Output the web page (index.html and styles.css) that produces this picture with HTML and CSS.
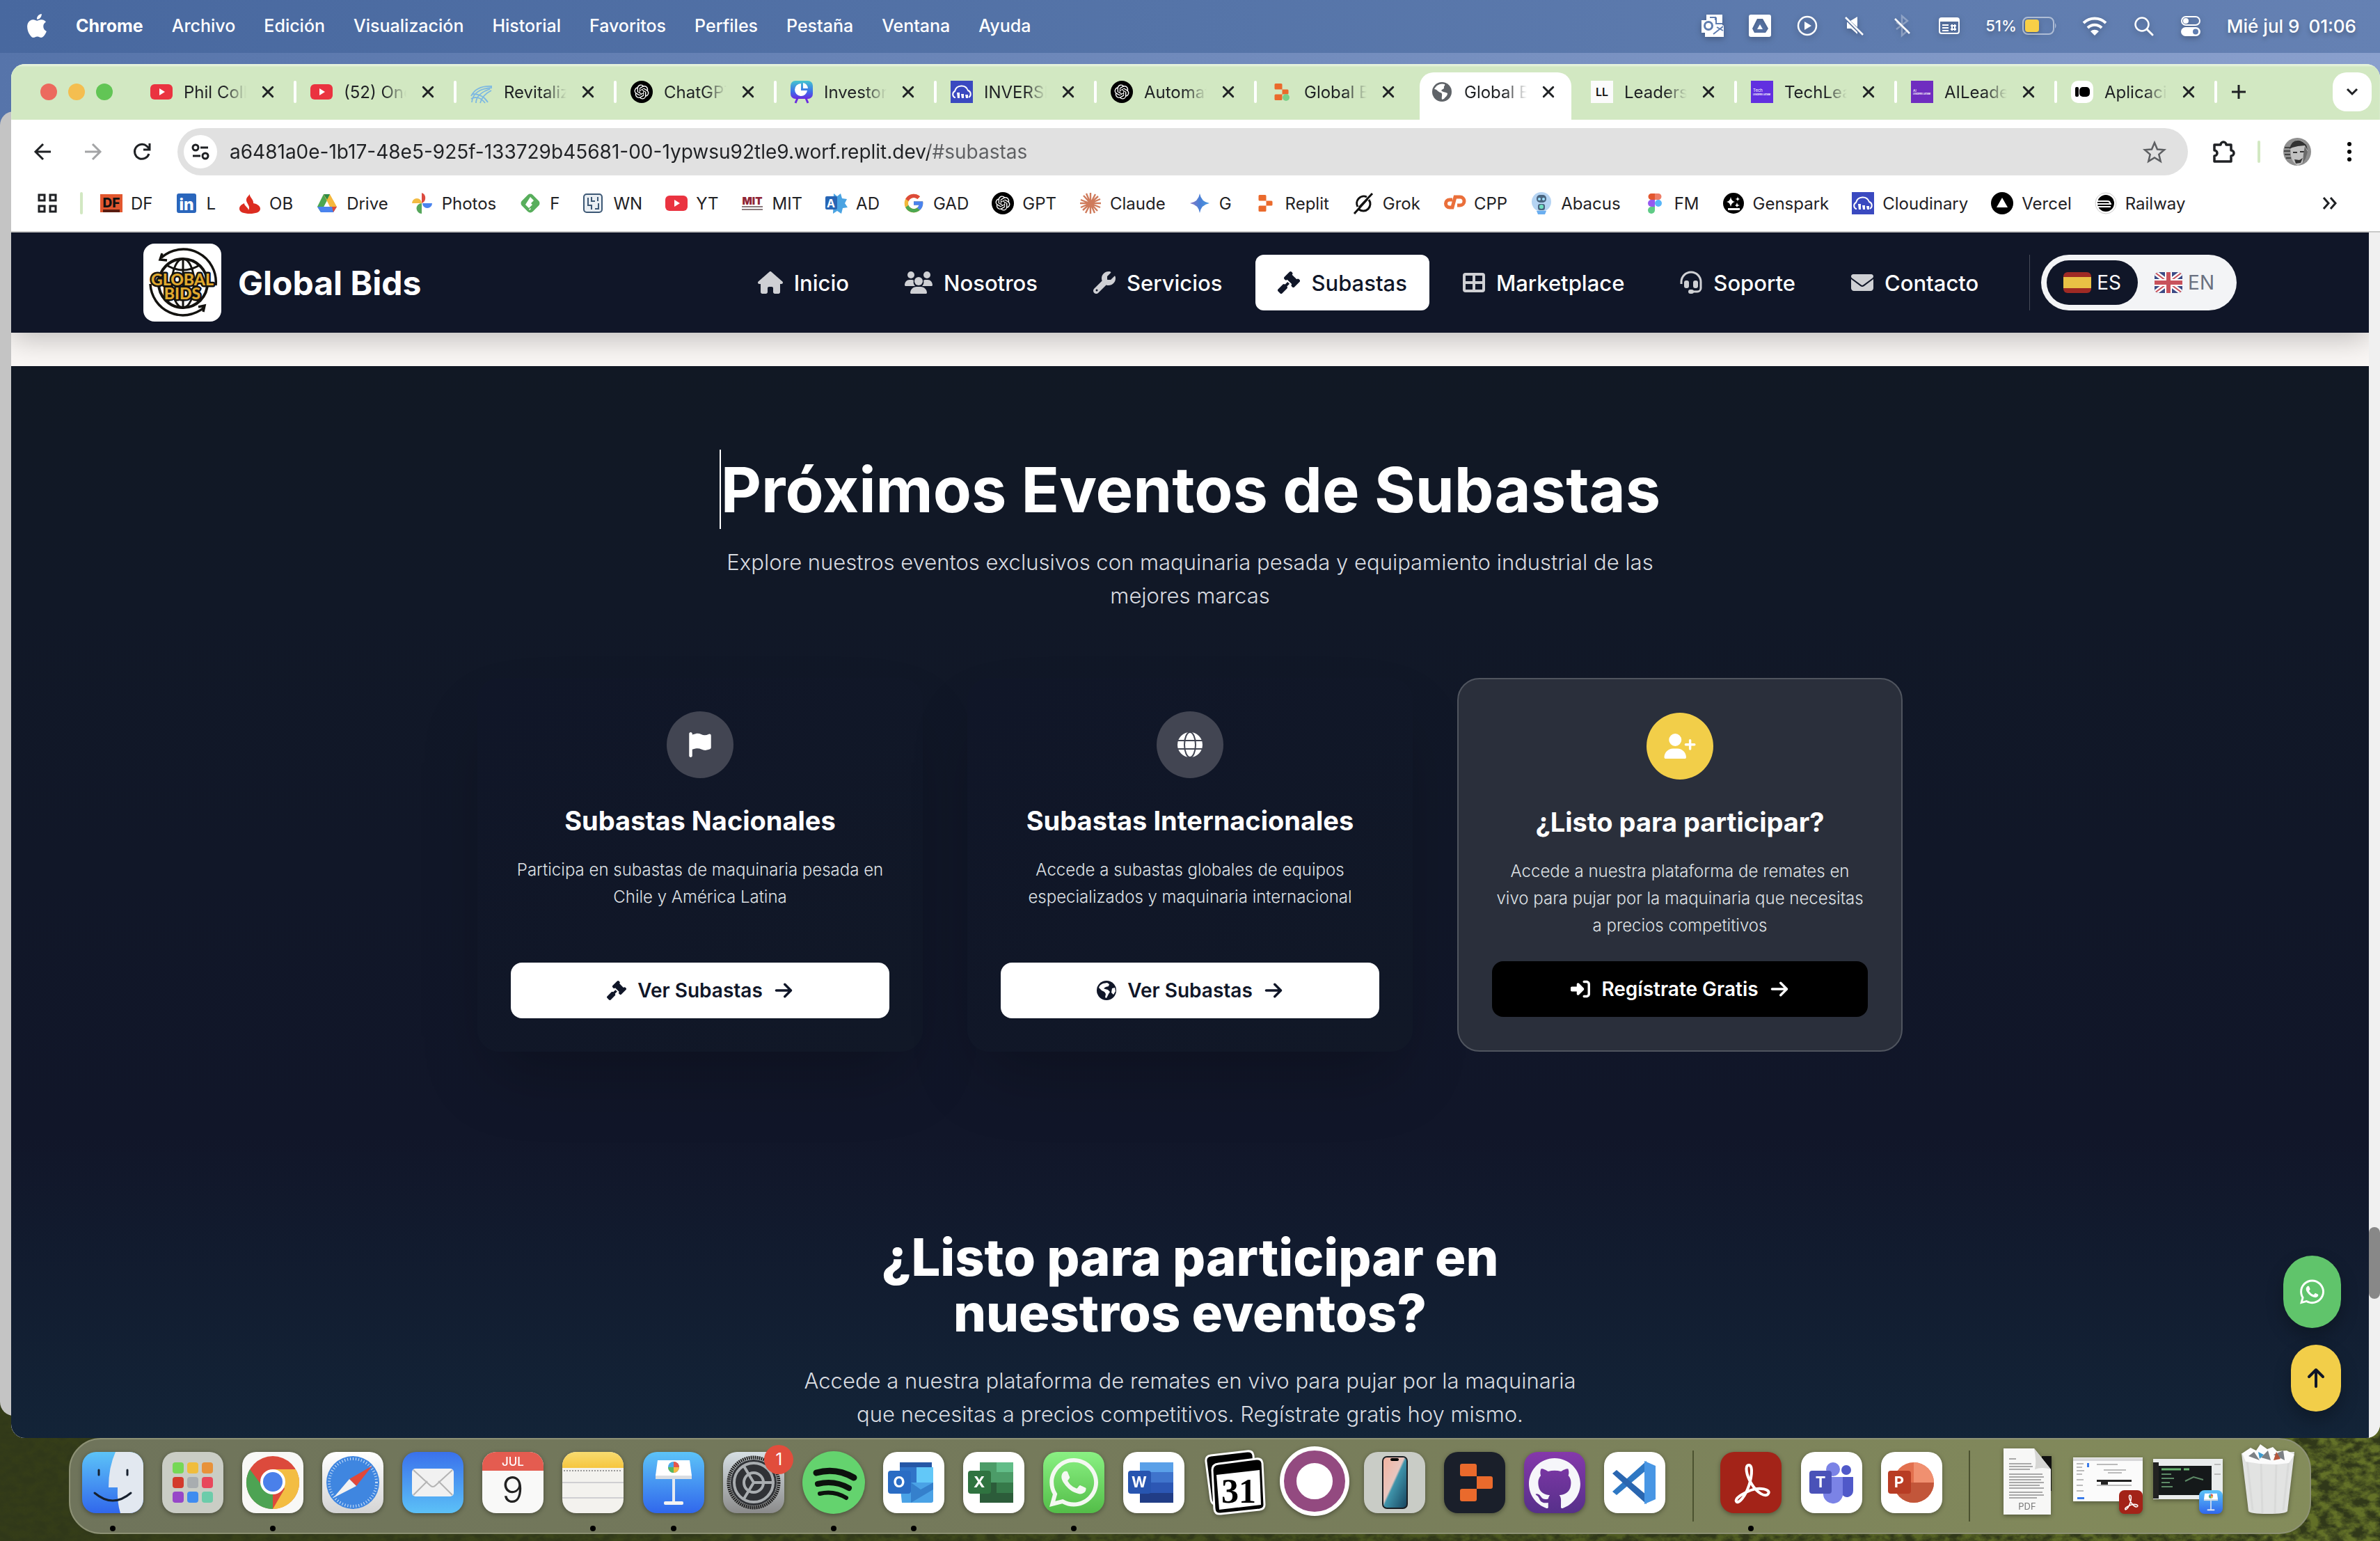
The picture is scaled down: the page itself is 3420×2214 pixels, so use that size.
FILE: index.html
```html
<!DOCTYPE html>
<html lang="es">
<head>
<meta charset="utf-8">
<meta name="viewport" content="width=device-width, initial-scale=1">
<title>Global Bids</title>
<link rel="stylesheet" href="styles.css">
</head>
<body>
<svg class="sprite" aria-hidden="true">
  <defs>
    <linearGradient id="g-blue" x1="0" y1="0" x2="0" y2="1"><stop offset="0" stop-color="#5cc3f8"/><stop offset="1" stop-color="#3067ec"/></linearGradient>
    <linearGradient id="g-mail" x1="0" y1="0" x2="0" y2="1"><stop offset="0" stop-color="#3a71ec"/><stop offset="1" stop-color="#5cc1f7"/></linearGradient>
    <linearGradient id="g-green" x1="0" y1="0" x2="0" y2="1"><stop offset="0" stop-color="#8af183"/><stop offset="1" stop-color="#53bd48"/></linearGradient>
    <linearGradient id="g-purple" x1="0" y1="0" x2="0" y2="1"><stop offset="0" stop-color="#8538ab"/><stop offset="1" stop-color="#56308a"/></linearGradient>
    <linearGradient id="g-grey" x1="0" y1="0" x2="0" y2="1"><stop offset="0" stop-color="#d6dfe4"/><stop offset="1" stop-color="#8b8b8b"/></linearGradient>
    <linearGradient id="g-white" x1="0" y1="0" x2="0" y2="1"><stop offset="0" stop-color="#ffffff"/><stop offset="1" stop-color="#d4d4d4"/></linearGradient>
    <linearGradient id="g-yellow" x1="0" y1="0" x2="0" y2="1"><stop offset="0" stop-color="#f8dc70"/><stop offset="1" stop-color="#f6c63f"/></linearGradient>
    <linearGradient id="g-pitch" x1="0" y1="0" x2="0" y2="1"><stop offset="0" stop-color="#45c6cf"/><stop offset=".6" stop-color="#3d6fe8"/><stop offset="1" stop-color="#6a2be0"/></linearGradient>
    <linearGradient id="g-gem" x1="0" y1="0" x2="1" y2="0"><stop offset="0" stop-color="#8a79c4"/><stop offset=".5" stop-color="#4a7fd6"/><stop offset="1" stop-color="#4a9be0"/></linearGradient>
    <linearGradient id="g-phone" x1="0" y1="0" x2="1" y2="1"><stop offset="0" stop-color="#f3b3a0"/><stop offset=".45" stop-color="#e8c6bf"/><stop offset=".5" stop-color="#3f94ab"/><stop offset="1" stop-color="#17455f"/></linearGradient>
    <filter id="grass" x="0" y="0" width="100%" height="100%">
      <feTurbulence type="fractalNoise" baseFrequency="0.06 0.09" numOctaves="5" seed="8"/>
      <feColorMatrix values="0 0 0 0 0.03  0 0 0 0 0.04  0 0 0 0 0.01  2 1.8 0 0 -1.4"/>
    </filter>
  </defs>
  <symbol id="apple" viewBox="0 0 24 24"><path d="M12.152 6.896c-.948 0-2.415-1.078-3.96-1.04-2.04.027-3.91 1.183-4.961 3.014-2.117 3.675-.546 9.103 1.519 12.09 1.013 1.454 2.208 3.09 3.792 3.039 1.52-.065 2.09-.987 3.935-.987 1.831 0 2.35.987 3.96.948 1.637-.026 2.676-1.48 3.676-2.948 1.156-1.688 1.636-3.325 1.662-3.415-.039-.013-3.182-1.221-3.22-4.857-.026-3.04 2.48-4.494 2.597-4.559-1.429-2.09-3.623-2.324-4.39-2.376-2-.156-3.675 1.09-4.61 1.09zM15.53 3.83c.843-1.012 1.4-2.427 1.245-3.83-1.207.052-2.662.805-3.532 1.818-.78.896-1.454 2.338-1.273 3.714 1.338.104 2.715-.688 3.559-1.701"/></symbol>
  <symbol id="close" viewBox="0 0 16 16"><path d="M2 2l12 12M14 2L2 14" stroke="currentColor" stroke-width="2.6" stroke-linecap="round"/></symbol>
  <symbol id="youtube" viewBox="0 0 32 32"><rect y="5" width="32" height="22" rx="6" fill="#ea3340"/><path d="M13 11l8 5-8 5z" fill="#fff"/></symbol>
  <symbol id="openai" viewBox="0 0 32 32"><circle cx="16" cy="16" r="16" fill="#000"/><g transform="translate(5.500 5.500) scale(.875)" fill="#fff"><path d="M22.2819 9.8211a5.9847 5.9847 0 0 0-.5157-4.9108 6.0462 6.0462 0 0 0-6.5098-2.9A6.0651 6.0651 0 0 0 4.9807 4.1818a5.9847 5.9847 0 0 0-3.9977 2.9 6.0462 6.0462 0 0 0 .7427 7.0966 5.98 5.98 0 0 0 .511 4.9107 6.051 6.051 0 0 0 6.5146 2.9001A5.9847 5.9847 0 0 0 13.2599 24a6.0557 6.0557 0 0 0 5.7718-4.2058 5.9894 5.9894 0 0 0 3.9977-2.9001 6.0557 6.0557 0 0 0-.7475-7.0729zm-9.022 12.6081a4.4755 4.4755 0 0 1-2.8764-1.0408l.1419-.0804 4.7783-2.7582a.7948.7948 0 0 0 .3927-.6813v-6.7369l2.02 1.1686a.071.071 0 0 1 .038.052v5.5826a4.504 4.504 0 0 1-4.4945 4.4944zm-9.6607-4.1254a4.4708 4.4708 0 0 1-.5346-3.0137l.142.0852 4.783 2.7582a.7712.7712 0 0 0 .7806 0l5.8428-3.3685v2.3324a.0804.0804 0 0 1-.0332.0615L9.74 19.9502a4.4992 4.4992 0 0 1-6.1408-1.6464zM2.3408 7.8956a4.485 4.485 0 0 1 2.3655-1.9728V11.6a.7664.7664 0 0 0 .3879.6765l5.8144 3.3543-2.0201 1.1685a.0757.0757 0 0 1-.071 0l-4.8303-2.7865A4.504 4.504 0 0 1 2.3408 7.872zm16.5963 3.8558L13.1038 8.364 15.1192 7.2a.0757.0757 0 0 1 .071 0l4.8303 2.7913a4.4944 4.4944 0 0 1-.6765 8.1042v-5.6772a.79.79 0 0 0-.407-.667zm2.0107-3.0231l-.142-.0852-4.7735-2.7818a.7759.7759 0 0 0-.7854 0L9.409 9.2297V6.8974a.0662.0662 0 0 1 .0284-.0615l4.8303-2.7866a4.4992 4.4992 0 0 1 6.6802 4.66zM8.3065 12.863l-2.02-1.1638a.0804.0804 0 0 1-.038-.0567V6.0742a4.4992 4.4992 0 0 1 7.3757-3.4537l-.142.0805L8.704 5.459a.7948.7948 0 0 0-.3927.6813zm1.0976-2.3654l2.602-1.4998 2.6069 1.4998v2.9994l-2.5974 1.4997-2.6067-1.4997Z"/></g></symbol>
  <symbol id="cloudinary" viewBox="0 0 32 32"><rect width="32" height="32" fill="#3a49c0"/><path d="M7 24H6a5 5 0 0 1 0-9 10 10 0 0 1 19-1 5.500 5.500 0 0 1 1 10" fill="none" stroke="#fff" stroke-width="2"/><path d="M9 17h4v8h-3zM15 19h4v6h-3zM21 20h4v5h-3z" fill="#fff"/></symbol>
  <symbol id="replit" viewBox="0 0 32 32"><path d="M7 4h8a1.500 1.500 0 0 1 1.500 1.500v7H7a1.500 1.500 0 0 1-1.500-1.500V5.500A1.500 1.500 0 0 1 7 4zM16.500 12.500H24a1.500 1.500 0 0 1 1.500 1.500v4a1.500 1.500 0 0 1-1.500 1.500h-7.500zM7 19.500h9.500v7A1.500 1.500 0 0 1 15 28H7a1.500 1.500 0 0 1-1.500-1.500V21A1.500 1.500 0 0 1 7 19.500z" fill="#ea6a2c"/></symbol>
  <symbol id="gavel" viewBox="0 0 512 512"><path d="M318.600 9.400c-12.500-12.500-32.800-12.500-45.300 0l-120 120c-12.500 12.500-12.500 32.800 0 45.300l16 16c12.500 12.500 32.800 12.500 45.300 0l4-4L325.400 293.400l-4 4c-12.500 12.500-12.500 32.800 0 45.300l16 16c12.500 12.500 32.800 12.500 45.300 0l120-120c12.500-12.500 12.500-32.800 0-45.300l-16-16c-12.500-12.500-32.800-12.500-45.300 0l-4 4L330.600 74.600l4-4c12.500-12.500 12.500-32.800 0-45.300l-16-16zm-152 288c-12.500-12.500-32.800-12.500-45.300 0l-112 112c-12.500 12.500-12.500 32.800 0 45.300l48 48c12.500 12.500 32.800 12.500 45.300 0l112-112c12.500-12.500 12.500-32.800 0-45.300l-1.400-1.400L272 285.300 226.700 240 168 298.700l-1.400-1.400z"/></symbol>
  <symbol id="arrow" viewBox="0 0 448 512"><path d="M438.600 278.600c12.500-12.500 12.500-32.800 0-45.300l-160-160c-12.500-12.500-32.800-12.500-45.300 0s-12.500 32.800 0 45.300L338.800 224 32 224c-17.700 0-32 14.300-32 32s14.300 32 32 32l306.700 0L233.400 393.400c-12.500 12.500-12.500 32.800 0 45.300s32.800 12.500 45.300 0l160-160z"/></symbol>
  <symbol id="whatsapp" viewBox="0 0 448 512"><path d="M380.900 97.100C339 55.100 283.200 32 223.900 32c-122.400 0-222 99.600-222 222 0 39.100 10.200 77.300 29.600 111L0 480l117.700-30.900c32.400 17.700 68.900 27 106.100 27h.1c122.300 0 224.100-99.600 224.100-222 0-59.300-25.200-115-67.100-157zm-157 341.600c-33.200 0-65.700-8.900-94-25.700l-6.700-4-69.800 18.300L72 359.200l-4.400-7c-18.500-29.400-28.200-63.300-28.200-98.200 0-101.700 82.800-184.500 184.600-184.500 49.300 0 95.600 19.200 130.400 54.100 34.800 34.900 56.200 81.200 56.100 130.500 0 101.800-84.900 184.600-186.600 184.600zm101.200-138.200c-5.500-2.800-32.800-16.200-37.900-18-5.100-1.900-8.800-2.800-12.500 2.800-3.700 5.600-14.300 18-17.600 21.800-3.200 3.700-6.500 4.200-12 1.400-32.600-16.300-54-29.100-75.500-66-5.700-9.800 5.700-9.100 16.300-30.300 1.800-3.700.9-6.900-.5-9.700-1.400-2.800-12.500-30.100-17.100-41.200-4.500-10.800-9.100-9.300-12.500-9.500-3.200-.2-6.900-.2-10.600-.2-3.700 0-9.700 1.400-14.800 6.900-5.100 5.600-19.400 19-19.400 46.300 0 27.300 19.900 53.700 22.600 57.400 2.800 3.700 39.100 59.700 94.800 83.800 35.200 15.200 49 16.500 66.600 13.900 10.700-1.600 32.800-13.400 37.400-26.400 4.600-13 4.600-24.100 3.200-26.400-1.300-2.500-5-3.900-10.500-6.600z"/></symbol>
  <symbol id="acrobat" viewBox="0 0 88 88"><rect width="88" height="88" rx="20" fill="#a32318"/><path d="M41 19c-6 0-4 14 4 27s20 20 24 14-12-10-25-5-23 12-21 16 10-3 16-17 9-35 2-35z" fill="none" stroke="#fff" stroke-width="4"/></symbol>
  <symbol id="keynote" viewBox="0 0 88 88"><rect width="88" height="88" rx="20" fill="url(#g-blue)"/><path d="M21 12h46l3 22H18z" fill="#fff"/><path d="M18 34h52v5H18z" fill="#d9dde2"/><circle cx="44" cy="22" r="8" fill="#4aa8e8"/><path d="M44 22v-8a8 8 0 0 1 8 8z" fill="#e8554a"/><path d="M44 22h8a8 8 0 0 1-8 8z" fill="#f4b942"/><path d="M44 22v8a8 8 0 0 1-8-8z" fill="#58b85c"/><path d="M42 39h4v33h-4z" fill="#e6eaf0"/><rect x="30" y="71" width="28" height="5" rx="2" fill="#f3f3f3"/></symbol>
</svg>

<div class="desktop">
  <svg class="grass" aria-hidden="true"><rect width="100%" height="100%" filter="url(#grass)"/></svg>
  <header class="menubar">
    <nav class="menu">
      <svg class="menu-apple"><use href="#apple"/></svg>
      <button class="menu-app">Chrome</button>
      <button>Archivo</button><button>Edición</button><button>Visualización</button><button>Historial</button><button>Favoritos</button><button>Perfiles</button><button>Pestaña</button><button>Ventana</button><button>Ayuda</button>
    </nav>
    <div class="status">
      <svg viewBox="0 0 32 32"><path d="M7 0h23v15l2 1v16H5v-6H0V8h7z"/><g fill="none" stroke="#5f7db0" stroke-width="2"><circle cx="10" cy="16" r="5.500" stroke-width="3"/><path d="M21 4v9h9M22 18l9 5M31 17l-14 11M12 4h8v4"/></g></svg>
      <svg viewBox="0 0 32 32"><path fill-rule="evenodd" d="M3 0h26a3 3 0 0 1 3 3v26a3 3 0 0 1-3 3H3a3 3 0 0 1-3-3V3a3 3 0 0 1 3-3zm9 6L5 20l3 6h16l4-6-8-14zm4 8l4 7h-8z"/></svg>
      <svg viewBox="0 0 32 32"><circle cx="16" cy="16" r="13" fill="none" stroke="#fff" stroke-width="2.500"/><path d="M12 10l10 6-10 6z"/></svg>
      <svg viewBox="0 0 32 32"><path d="M10 9L20 3v15zM5 11v9h6l9 8v-3L6 11z"/><path d="M3 4l25 25" stroke="#fff" stroke-width="2.500"/></svg>
      <svg viewBox="0 0 32 32"><path d="M8 11l16 12-8 7V2l8 7L8 21" fill="none" stroke="#fff" stroke-opacity=".3" stroke-width="2.500"/><path d="M6 6l21 21" stroke="#fff" stroke-width="2.500"/></svg>
      <svg viewBox="0 0 32 32"><rect x="2" y="5" width="28" height="22" rx="3" fill="none" stroke="#fff" stroke-width="2"/><path d="M2 5h28v5H2zM6 14h9v2H6zM6 18h9v2H6zM6 22h9v2H6z"/><g fill="none" stroke="#fff" stroke-width="2"><path d="M20 14v9M24 14v9M18 16h8M18 21h8"/></g></svg>
      <span class="battery"><span>51%</span><svg viewBox="0 0 50 26"><rect x="1" y="1" width="44" height="24" rx="7" fill="none" stroke="#fff" stroke-opacity=".5" stroke-width="2"/><rect x="4" y="4" width="20" height="18" rx="4" fill="#f8cf47"/><path d="M47 9q3 4 0 8z" fill-opacity=".5"/></svg></span>
      <svg class="wide" viewBox="0 0 36 32"><g fill="none" stroke="#fff" stroke-width="4"><path d="M2 12a23 23 0 0 1 32 0M8 19a14 14 0 0 1 20 0"/></g><path d="M12 24a9 9 0 0 1 12 0l-6 6z"/></svg>
      <svg viewBox="0 0 32 32"><circle cx="14" cy="14" r="9.500" fill="none" stroke="#fff" stroke-width="2.500"/><path d="M21 21l8 8" stroke="#fff" stroke-width="3" stroke-linecap="round"/></svg>
      <svg viewBox="0 0 32 32"><rect x="3" y="3" width="26" height="12" rx="6" fill="none" stroke="#fff" stroke-width="2"/><circle cx="9" cy="9" r="4"/><rect x="2" y="18" width="28" height="13" rx="6.500"/><circle cx="23" cy="24.500" r="4" fill="#5f7db0"/></svg>
      <span class="clock">Mié jul 9&ensp;01:06</span>
    </div>
  </header>

  <div class="stage">
  <div class="back-window"></div>
  <main class="window">
    <div class="tabstrip">
      <div class="lights"><i class="red"></i><i class="amber"></i><i class="green"></i></div>
      <div class="tabs">
        <div class="tab"><svg><use href="#youtube"/></svg><a href="#t1">Phil Coll</a><button aria-label="Cerrar"><svg><use href="#close"/></svg></button></div>
        <div class="tab"><svg><use href="#youtube"/></svg><a href="#t2">(52) One</a><button aria-label="Cerrar"><svg><use href="#close"/></svg></button></div>
        <div class="tab"><svg viewBox="0 0 32 32"><g fill="none" stroke="#7db8e2" stroke-width="1.800"><path d="M1 22C6 12 16 7 31 8M2 31C3 18 14 11 31 10M8 32c0-10 8-16 20-20M14 32c2-8 8-14 16-18M1 26c6-4 14-2 20 6M3 19c10 0 18 5 22 12"/></g></svg><a href="#t3">Revitaliza</a><button aria-label="Cerrar"><svg><use href="#close"/></svg></button></div>
        <div class="tab"><svg><use href="#openai"/></svg><a href="#t4">ChatGPT</a><button aria-label="Cerrar"><svg><use href="#close"/></svg></button></div>
        <div class="tab"><svg viewBox="0 0 32 32"><rect width="32" height="26" rx="7" fill="url(#g-pitch)"/><path d="M10 25l-3 7M22 25l3 7" stroke="#6a2be0" stroke-width="3"/><path d="M15 4v10h9a9 9 0 1 1-9-10z" fill="#fff"/><path d="M18 3a9 9 0 0 1 7 8h-7z" fill="#fff"/></svg><a href="#t5">Investor</a><button aria-label="Cerrar"><svg><use href="#close"/></svg></button></div>
        <div class="tab"><svg><use href="#cloudinary"/></svg><a href="#t6">INVERSI</a><button aria-label="Cerrar"><svg><use href="#close"/></svg></button></div>
        <div class="tab"><svg><use href="#openai"/></svg><a href="#t7">Automat</a><button aria-label="Cerrar"><svg><use href="#close"/></svg></button></div>
        <div class="tab before-active"><svg viewBox="0 0 32 32"><use href="#replit"/><circle cx="22" cy="24" r="5" fill="#7ad08a"/></svg><a href="#t8">Global Bi</a><button aria-label="Cerrar"><svg><use href="#close"/></svg></button></div>
        <div class="tab active"><svg viewBox="0 0 32 32"><circle cx="16" cy="16" r="14" fill="#5f6368"/><path d="M5 12c4 0 5 4 9 5s1 6 2 10l3-1c2-3 5-4 5-8-3-2-5-1-8-3s4-3 3-5 2-3 1-5c-6-2-12 1-15 7z" fill="#fff"/></svg><a href="#t9">Global Bi</a><button aria-label="Cerrar"><svg><use href="#close"/></svg></button></div>
        <div class="tab"><svg viewBox="0 0 32 32"><rect width="32" height="32" fill="#fbfbfb"/><text x="16" y="22" text-anchor="middle" font-size="16" font-weight="600" fill="#111">LL</text></svg><a href="#t10">Leaders</a><button aria-label="Cerrar"><svg><use href="#close"/></svg></button></div>
        <div class="tab"><svg viewBox="0 0 32 32"><rect width="32" height="32" fill="#6130e0"/><text x="3" y="16" font-size="6" fill="#fff">Tech</text><text x="3" y="21" font-size="3" font-weight="700" fill="#fff">LEADERS LATAM</text></svg><a href="#t11">TechLead</a><button aria-label="Cerrar"><svg><use href="#close"/></svg></button></div>
        <div class="tab"><svg viewBox="0 0 32 32"><rect width="32" height="32" fill="#6f2dc0"/><text x="3" y="16" font-size="5" fill="#fff">AI</text><text x="3" y="20" font-size="3" font-weight="700" fill="#fff">LEADERS LATAM</text></svg><a href="#t12">AILeader</a><button aria-label="Cerrar"><svg><use href="#close"/></svg></button></div>
        <div class="tab"><svg viewBox="0 0 32 32"><rect width="32" height="32" rx="10" fill="#fff"/><rect x="6" y="9" width="5" height="14" rx="2"/><rect x="12" y="9" width="15" height="14" rx="5"/></svg><a href="#t13">Aplicaci</a><button aria-label="Cerrar"><svg><use href="#close"/></svg></button></div>
      </div>
      <button class="new-tab" aria-label="Nueva pestaña"><svg viewBox="0 0 22 22"><path d="M11 1v20M1 11h20" stroke="#1f2124" stroke-width="3"/></svg></button>
      <button class="tab-search" aria-label="Buscar pestañas"><svg viewBox="0 0 20 20"><path d="M3 6l7 7 7-7" fill="none" stroke="#1f2124" stroke-width="3"/></svg></button>
    </div>

    <div class="toolbar">
      <button aria-label="Atrás"><svg viewBox="0 0 32 32"><path d="M27 16H6M16 5L5 16l11 11" fill="none" stroke="#1f2124" stroke-width="3"/></svg></button>
      <button aria-label="Adelante"><svg viewBox="0 0 32 32"><path d="M5 16h21M16 5l11 11-11 11" fill="none" stroke="#a3a4a6" stroke-width="3"/></svg></button>
      <button aria-label="Recargar"><svg viewBox="0 0 32 32"><path d="M26 19a10.500 10.500 0 1 1-3-11l4 4M27 4v9h-9" fill="none" stroke="#1f2124" stroke-width="3"/></svg></button>
      <div class="omnibox">
        <button class="site-info" aria-label="Información del sitio"><svg viewBox="0 0 28 28"><g fill="none" stroke="#1f2124" stroke-width="3"><circle cx="7" cy="8" r="4"/><path d="M14 8h11"/><circle cx="21" cy="20" r="4"/><path d="M3 20h11"/></g></svg></button>
        <input class="url" aria-label="Dirección" value="a6481a0e-1b17-48e5-925f-133729b45681-00-1ypwsu92tle9.worf.replit.dev/#subastas">
        <button aria-label="Favorito"><svg viewBox="0 0 32 32"><path d="M16 3l4 9.500 10 .8-7.700 6.600 2.400 9.900L16 24.500 7.300 29.800l2.400-9.900L2 13.300l10-.8z" fill="none" stroke="#5d5f62" stroke-width="2.500"/></svg></button>
      </div>
      <button aria-label="Extensiones"><svg viewBox="0 0 32 32"><path d="M3 6h9a4 4 0 0 1 8 0h7v8a4 4 0 0 1 0 8v8H3v-8a4 4 0 0 0 0-8z" fill="none" stroke="#1f2124" stroke-width="3.500" stroke-linejoin="round"/></svg></button>
      <i class="rule"></i>
      <button class="avatar" aria-label="Perfil"><svg viewBox="0 0 40 40"><circle cx="20" cy="20" r="20" fill="#8f8f8f"/><path d="M2 14h9M1 19h9M2 24h8M4 29h7" stroke="#444" stroke-width="2"/><path d="M10 12Q20-3 31 8q6 6 3 14l-4 12-9 6q-8-4-10-14z" fill="#c2c2c2"/><path d="M9 16Q12 2 24 4q11 4 11 14l-4-7-10 1-8 2z" fill="#333"/><path d="M14 20h6v2h-6zM24 19h6v2h-6zM16 31l7 1 5-3-3 7-7 1z" fill="#333"/><path d="M31 12l4 8-3 10-4 7 1-14z" fill="#6a6a6a"/></svg></button>
      <button aria-label="Más"><svg viewBox="0 0 32 32"><circle cx="16" cy="5" r="3"/><circle cx="16" cy="16" r="3"/><circle cx="16" cy="27" r="3"/></svg></button>
    </div>

    <nav class="bookmarks">
      <button class="apps" aria-label="Aplicaciones"><svg viewBox="0 0 28 28"><g fill="none" stroke="#1f2124" stroke-width="3"><path d="M2 2h8v8H2zM18 2h8v8h-8zM2 18h8v8H2zM18 18h8v8h-8z"/></g></svg></button>
      <i class="rule"></i>
      <a href="#df"><svg viewBox="0 0 32 32"><rect y="3" width="32" height="26" fill="#e2572f"/><text x="16" y="22" text-anchor="middle" font-size="19" font-weight="800" fill="#111">DF</text><rect x="4" y="25" width="24" height="4" fill="#5a1c10"/></svg>DF</a>
      <a href="#l"><svg viewBox="0 0 32 32"><rect x="1" y="2" width="28" height="28" rx="3" fill="#2a66bc"/><text x="15" y="26" text-anchor="middle" font-size="23" font-weight="800" fill="#fff">in</text></svg>L</a>
      <a href="#ob"><svg viewBox="0 0 32 32"><path d="M16 1c-2 6 6 9 5 15 6 1 10 4 10 8 0 5-7 7-15 7S1 29 1 24c0-4 3-6 7-8 0 4 6 6 6 10 4-6-4-10-3-16 1-4 5-5 5-9z" fill="#dc2c20"/></svg>OB</a>
      <a href="#drive"><svg viewBox="0 0 32 32"><path d="M11 3L2 21l5 8 9-17z" fill="#4ca751"/><path d="M11 3h9l10 18H20z" fill="#f5b83d"/><path d="M2 21h28l-5 8H7z" fill="#4a83ee"/><path d="M23 21h7l-5 8z" fill="#dd4b3a"/><path d="M11 3h9l-4 8z" fill="#2f8a46"/></svg>Drive</a>
      <a href="#photos"><svg viewBox="0 0 32 32"><path d="M15 1a8 8 0 0 1 0 15z" fill="#dc4b3f"/><path d="M15 16H1a7 7 0 0 1 14 0z" fill="#f2bb42"/><path d="M16 16h14a7 7 0 0 1-14 0z" fill="#4a84ee"/><path d="M15 16v15a7.500 7.500 0 0 1 0-15z" fill="#55a65a"/></svg>Photos</a>
      <a href="#f"><svg viewBox="0 0 32 32"><rect x="5" y="5" width="22" height="22" rx="5" transform="rotate(45 16 16)" fill="#58ae5c"/><path d="M16 7l5 5-9 9-3-3zM16 15l3 3-5 5-2-2zM16 23l1 1-2 2-1-1z" fill="#fff"/></svg>F</a>
      <a href="#wn"><svg viewBox="0 0 32 32"><rect x="2" y="3" width="26" height="26" rx="4" fill="#e9eef3" stroke="#3d5875" stroke-width="2"/><path d="M8 8v11h5v6M13 7v6h5M22 7v6M18 24h5v-8" fill="none" stroke="#3d5875" stroke-width="2"/></svg>WN</a>
      <a href="#yt"><svg><use href="#youtube"/></svg>YT</a>
      <a href="#mit"><svg viewBox="0 0 32 32"><text x="16" y="18" text-anchor="middle" font-size="15" font-weight="900" fill="#8f2435">MIT</text><path d="M1 21h30M1 25h30" stroke="#8a7a7d" stroke-width="2"/></svg>MIT</a>
      <a href="#ad"><svg viewBox="0 0 32 32"><path d="M12 2l5 4 5-4 2 7 7 1-3 6 4 6-7 1-2 8-6-4-6 4z" fill="#4aa3e2"/><rect y="6" width="17" height="19" rx="2" fill="#2765b5"/><text x="8" y="22" text-anchor="middle" font-size="16" font-weight="700" fill="#fff">A</text></svg>AD</a>
      <a href="#gad"><svg viewBox="0 0 48 48"><path d="M43.600 20H24v8h11.300c-1.600 4.700-6 8-11.300 8a12 12 0 1 1 8-21l5.600-5.600A20 20 0 1 0 44 24c0-1.300-.1-2.700-.4-4z" fill="#f2b93b"/><path d="M6.300 14.700l6.600 4.800A12 12 0 0 1 32 15l5.600-5.600a20 20 0 0 0-31.300 5.300z" fill="#dd4b3a"/><path d="M24 44c5.200 0 9.900-2 13.400-5.200l-6.200-5.200a12 12 0 0 1-18.500-5.500l-6.500 5A20 20 0 0 0 24 44z" fill="#4ca751"/><path d="M43.600 20H24v8h11.300a12 12 0 0 1-4.100 5.600l6.200 5.200C37 39.200 44 34 44 24c0-1.300-.1-2.700-.4-4z" fill="#4a83ee"/></svg>GAD</a>
      <a href="#gpt"><svg><use href="#openai"/></svg>GPT</a>
      <a href="#claude"><svg viewBox="0 0 32 32"><path d="M16 1v30M1 16h30M6 5l20 22M27 6L5 26M10 2l12 28M23 3L9 30M2 11l28 11M2 22l28-12" stroke="#cf7b5c" stroke-width="2.400"/></svg>Claude</a>
      <a href="#g"><svg viewBox="0 0 32 32"><path d="M16 2q2 12 14 14-12 2-14 14-2-12-14-14Q14 14 16 2z" fill="url(#g-gem)"/></svg>G</a>
      <a href="#replit-home"><svg><use href="#replit"/></svg>Replit</a>
      <a href="#grok"><svg viewBox="0 0 32 32"><path d="M21 7a10 10 0 0 0-13 14M10 25a10 10 0 0 0 14-14M10 22L29 2M22 10L3 31" fill="none" stroke="#111" stroke-width="3"/></svg>Grok</a>
      <a href="#cpp"><svg viewBox="0 0 32 32"><g fill="none" stroke="#ea6f3a" stroke-width="5"><path d="M13 11H9a5.500 5.500 0 0 0 0 11h4l4-15h7a6 6 0 0 1 0 12h-4"/></g></svg>CPP</a>
      <a href="#abacus"><svg viewBox="0 0 32 32"><circle cx="16" cy="14" r="14" fill="#b5d4f3"/><rect x="9" y="4" width="14" height="11" rx="5" fill="#49647f"/><rect x="11" y="17" width="10" height="9" rx="3" fill="#49647f"/><circle cx="13" cy="10" r="2" fill="#9fe0ff"/><circle cx="19" cy="10" r="2" fill="#9fe0ff"/><circle cx="16" cy="21" r="3" fill="#6fe0c0"/><path d="M9 27h14l-2 5H11z" fill="#6aaef0"/></svg>Abacus</a>
      <a href="#fm"><svg viewBox="0 0 32 32"><path d="M11 2h5v9h-5a4.500 4.500 0 0 1 0-9z" fill="#e2572f"/><path d="M16 2h5a4.500 4.500 0 0 1 0 9h-5z" fill="#ee7d67"/><path d="M11 11h5v10h-5a5 5 0 0 1 0-10z" fill="#9659f0"/><circle cx="21" cy="16" r="5" fill="#58b6f8"/><path d="M11 21h5v5a5 5 0 1 1-5-5z" fill="#5fcb86"/></svg>FM</a>
      <a href="#genspark"><svg viewBox="0 0 32 32"><circle cx="16" cy="16" r="15"/><path d="M12 7q1 6 6 7-5 1-6 7-1-6-6-7 5-1 6-7zM22 6q0 4 4 4-4 0-4 4 0-4-4-4 4 0 4-4zM21 15l1 3 3 1-3 1-1 2-1-2-2-1 2-1zM8 23h17v3H8z" fill="#fff"/></svg>Genspark</a>
      <a href="#cloudinary-home"><svg><use href="#cloudinary"/></svg>Cloudinary</a>
      <a href="#vercel"><svg viewBox="0 0 32 32"><circle cx="16" cy="16" r="16"/><path d="M16 8l8 14H8z" fill="#fff"/></svg>Vercel</a>
      <a href="#railway"><svg viewBox="0 0 32 32"><circle cx="16" cy="16" r="15" fill="#fff" stroke="#ccc"/><circle cx="16" cy="16" r="12"/><path d="M4 13h14q4 0 4 3M4 17h20M5 21h18" fill="none" stroke="#fff" stroke-width="2"/></svg>Railway</a>
      <button class="more" aria-label="Más marcadores"><svg viewBox="0 0 24 24"><path d="M3 4l7 8-7 8M13 4l7 8-7 8" fill="none" stroke="#1f2124" stroke-width="3"/></svg></button>
    </nav>

    <div class="viewport">
      <div class="page">
        <header class="site-header">
          <div class="container">
            <a class="brand" href="#inicio">
              <svg class="logo" viewBox="0 0 112 112"><rect width="112" height="112" rx="16" fill="#fff"/><g fill="none" stroke="#13120f" stroke-width="3"><circle cx="57" cy="57" r="35" stroke-width="4"/><ellipse cx="57" cy="57" rx="16" ry="35"/><path d="M57 22v70M35 32q22 12 44 0M35 82q22-12 44 0"/><path d="M26 20A47 47 0 0 1 104 60M10 58a47 47 0 0 0 77 34M27 14l-3 9 10 1M79 91l9-2-2 9" stroke-width="3.500"/></g><g class="logo-text" text-anchor="middle"><text x="56" y="60" font-size="23">GLOBAL</text><text x="56" y="80" font-size="23">BIDS</text></g></svg>
              <span>Global Bids</span>
            </a>
            <nav class="site-nav">
              <a href="#inicio"><svg class="w36" viewBox="0 0 576 512"><path d="M575.800 255.500c0 18-15 32.100-32 32.100h-32l.7 160.200c0 2.700-.2 24.300-.5 24.300 0 22.100-17.900 40-40 40H392c-22.100 0-40-17.900-40-40v-88c0-17.700-14.300-32-32-32h-64c-17.700 0-32 14.300-32 32v88c0 22.100-17.900 40-40 40h-80c-22.100 0-40-17.900-40-40V287.600H32c-18 0-32-14-32-32.100 0-9 3-17 10-24L266.400 8c7-7 15-8 22-8s15 2 21 7l255.400 224.500c8 7 12 15 11 24z"/></svg>Inicio</a>
              <a href="#nosotros"><svg class="w40" viewBox="0 0 40 32"><circle cx="9" cy="5" r="5"/><circle cx="32" cy="5" r="5"/><path d="M0 20c0-5 3-8 7-8h3c1 0 2 0 3 1-1 3 0 6 2 8H1zM40 20c0-5-3-8-7-8h-3c-1 0-2 0-3 1 1 3 0 6-2 8h14z"/><circle cx="20" cy="14" r="6"/><path d="M8 31c0-5 4-9 9-9h6c5 0 9 4 9 9l-1 1H9z"/></svg>Nosotros</a>
              <a href="#servicios"><svg viewBox="0 0 512 512"><path d="M352 320c88.400 0 160-71.600 160-160c0-15.300-2.200-30.100-6.200-44.200c-3.100-10.800-16.400-13.200-24.300-5.300l-76.800 76.800c-3 3-7.100 4.700-11.300 4.700L336 192c-8.800 0-16-7.200-16-16l0-57.400c0-4.200 1.700-8.300 4.700-11.300l76.800-76.800c7.900-7.900 5.400-21.200-5.300-24.300C382.100 2.200 367.300 0 352 0C263.600 0 192 71.600 192 160c0 19.100 3.400 37.500 9.500 54.500L19.900 396.100C7.200 408.800 0 426.100 0 444.100C0 481.600 30.400 512 67.900 512c18 0 35.300-7.200 48-19.900L297.500 310.500c17 6.200 35.400 9.500 54.500 9.500zM80 408a24 24 0 1 1 0 48 24 24 0 1 1 0-48z"/></svg>Servicios</a>
              <a class="current" href="#subastas"><svg><use href="#gavel"/></svg>Subastas</a>
              <a href="#marketplace"><svg viewBox="0 0 32 32"><path fill-rule="evenodd" d="M4 2h24a4 4 0 0 1 4 4v20a4 4 0 0 1-4 4H4a4 4 0 0 1-4-4V6a4 4 0 0 1 4-4zm0 4v8h10V6zm14 0v8h10V6zM4 18v8h10v-8zm14 0v8h10v-8z"/></svg>Marketplace</a>
              <a href="#soporte"><svg viewBox="0 0 32 32"><path d="M2 18v-3a14 14 0 0 1 28 0v9a5 5 0 0 1-5 5h-8" fill="none" stroke="currentColor" stroke-width="3"/><rect x="6" y="13" width="7" height="11" rx="3"/><rect x="19" y="13" width="7" height="11" rx="3"/><rect x="12" y="26" width="8" height="6" rx="3"/></svg>Soporte</a>
              <a href="#contacto"><svg viewBox="0 0 512 512"><path d="M48 64C21.500 64 0 85.500 0 112c0 15.100 7.100 29.300 19.200 38.400L236.800 313.600c11.400 8.500 27 8.500 38.400 0L492.800 150.400c12.100-9.100 19.200-23.300 19.200-38.400c0-26.500-21.500-48-48-48L48 64zM0 176L0 384c0 35.300 28.700 64 64 64l384 0c35.300 0 64-28.700 64-64l0-208L294.400 339.200c-22.800 17.100-54 17.100-76.800 0L0 176z"/></svg>Contacto</a>
            </nav>
            <i class="nav-rule"></i>
            <div class="lang">
              <button class="on"><svg viewBox="0 0 40 30"><rect width="40" height="30" rx="6" fill="#9f2a24"/><rect y="7" width="40" height="16" fill="#e9c145"/></svg>ES</button>
              <button><svg viewBox="0 0 40 30"><clipPath id="uk"><rect width="40" height="30" rx="6"/></clipPath><g clip-path="url(#uk)"><rect width="40" height="30" fill="#3c4a85"/><path d="M0 0l40 30M40 0L0 30" stroke="#fff" stroke-width="7"/><path d="M0 0l40 30M40 0L0 30" stroke="#c8525c" stroke-width="2"/><path d="M20 0v30M0 15h40" stroke="#fff" stroke-width="10"/><path d="M20 0v30M0 15h40" stroke="#c8525c" stroke-width="6"/></g></svg>EN</button>
            </div>
          </div>
        </header>

        <section class="events" id="subastas">
          <h1>Próximos Eventos de Subastas</h1>
          <p class="lead">Explore nuestros eventos exclusivos con maquinaria pesada y equipamiento industrial de las mejores marcas</p>
          <div class="cards">
            <article class="card">
              <span class="badge"><svg viewBox="0 0 448 512"><path d="M64 32C64 14.300 49.700 0 32 0S0 14.300 0 32v448c0 17.700 14.300 32 32 32s32-14.300 32-32V352l64.300-16.100c41.100-10.300 84.600-5.500 122.500 13.400 44.200 22.100 95.500 24.800 141.700 7.400l34.700-13c12.500-4.700 20.800-16.600 20.800-30V66c0-23-24.200-38-44.800-27.700l-9.600 4.800c-46.300 23.200-100.800 23.200-147.100 0-35.100-17.600-75.400-22-113.500-12.500L64 48z"/></svg></span>
              <h2>Subastas Nacionales</h2>
              <p>Participa en subastas de maquinaria pesada en Chile y América Latina</p>
              <a class="btn" href="#nacionales"><svg><use href="#gavel"/></svg>Ver Subastas<svg><use href="#arrow"/></svg></a>
            </article>
            <article class="card">
              <span class="badge"><svg viewBox="0 0 36 36"><circle cx="18" cy="18" r="18"/><g fill="none" stroke="#424552" stroke-width="2"><ellipse cx="18" cy="18" rx="8" ry="18"/><path d="M0 12h36M0 24h36"/></g></svg></span>
              <h2>Subastas Internacionales</h2>
              <p>Accede a subastas globales de equipos especializados y maquinaria internacional</p>
              <a class="btn" href="#internacionales"><svg viewBox="0 0 28 28"><circle cx="14" cy="14" r="14"/><path d="M3 10l4 4 4 2 2 3-1 5 2 1 3-6 2-3-3-3-4-1-2-1 3-2 4-1 1-3-3-2-6 1q-5 2-6 6zM22 11l4-1 1 5-3 5-3-3z" fill="#fff"/></svg>Ver Subastas<svg><use href="#arrow"/></svg></a>
            </article>
            <article class="card featured">
              <span class="badge"><svg class="plus" viewBox="0 0 640 512"><path d="M96 128a128 128 0 1 1 256 0A128 128 0 1 1 96 128zM0 482.300C0 383.800 79.800 304 178.300 304l91.400 0C368.200 304 448 383.800 448 482.300c0 16.400-13.300 29.700-29.700 29.700L29.700 512C13.300 512 0 498.700 0 482.300zM504 312l0-64-64 0c-13.300 0-24-10.700-24-24s10.700-24 24-24l64 0 0-64c0-13.300 10.700-24 24-24s24 10.700 24 24l0 64 64 0c13.300 0 24 10.700 24 24s-10.700 24-24 24l-64 0 0 64c0 13.300-10.700 24-24 24s-24-10.700-24-24z"/></svg></span>
              <h2>¿Listo para participar?</h2>
              <p>Accede a nuestra plataforma de remates en vivo para pujar por la maquinaria que necesitas a precios competitivos</p>
              <a class="btn" href="#registro"><svg viewBox="0 0 512 512"><path d="M217.900 105.900L340.700 228.700c7.200 7.200 11.300 17.100 11.300 27.300s-4.100 20.100-11.300 27.300L217.900 406.100c-6.400 6.400-15 9.900-24 9.900c-18.700 0-33.900-15.200-33.900-33.900l0-62.100L32 320c-17.700 0-32-14.300-32-32l0-64c0-17.700 14.300-32 32-32l128 0 0-62.100c0-18.700 15.200-33.900 33.900-33.900c9 0 17.600 3.600 24 9.900zM352 416l64 0c17.700 0 32-14.300 32-32l0-256c0-17.700-14.300-32-32-32l-64 0c-17.700 0-32-14.300-32-32s14.300-32 32-32l64 0c53 0 96 43 96 96l0 256c0 53-43 96-96 96l-64 0c-17.700 0-32-14.300-32-32s14.300-32 32-32z"/></svg>Regístrate Gratis<svg><use href="#arrow"/></svg></a>
            </article>
          </div>
        </section>

        <section class="cta">
          <h2>¿Listo para participar en nuestros eventos?</h2>
          <p>Accede a nuestra plataforma de remates en vivo para pujar por la maquinaria que necesitas a precios competitivos. Regístrate gratis hoy mismo.</p>
        </section>

        <div class="floating">
          <a class="wa" href="#whatsapp-chat" aria-label="WhatsApp"><svg viewBox="0 0 448 512"><use href="#whatsapp" width="448" height="512"/></svg></a>
          <a class="up" href="#inicio" aria-label="Subir"><svg viewBox="0 0 24 28"><path d="M12 26V2M2 12L12 2l10 10" fill="none" stroke="#101628" stroke-width="4" stroke-linecap="round" stroke-linejoin="round"/></svg></a>
        </div>
      </div>
      <div class="scrollbar"><i></i></div>
    </div>
  </main>
  </div>

  <footer class="dock">
    <button class="running" aria-label="Finder"><svg viewBox="0 0 88 88"><rect width="88" height="88" rx="20" fill="url(#g-blue)"/><path d="M48 0h20a20 20 0 0 1 20 20v48a20 20 0 0 1-20 20H55q-5-16-4-37H38Q38 22 48 0z" fill="#e2e8f0"/><g fill="none" stroke="#16202e" stroke-width="3" stroke-linecap="round"><path d="M24 26v7M65 26v7M18 59q26 22 52 0"/></g></svg></button>
    <button aria-label="Launchpad"><svg viewBox="0 0 88 88"><rect width="88" height="88" rx="20" fill="#cacdc5"/><g><rect x="15" y="15" width="16" height="16" rx="4" fill="#76d856"/><rect x="36" y="15" width="16" height="16" rx="4" fill="#f0bd3c"/><rect x="57" y="15" width="16" height="16" rx="4" fill="#e8923a"/><rect x="15" y="36" width="16" height="16" rx="4" fill="#d33a2c"/><rect x="36" y="36" width="16" height="16" rx="4" fill="#a8adb0"/><rect x="57" y="36" width="16" height="16" rx="4" fill="#e8485c"/><rect x="15" y="57" width="16" height="16" rx="4" fill="#9747c8"/><rect x="36" y="57" width="16" height="16" rx="4" fill="#3f8cf0"/><rect x="57" y="57" width="16" height="16" rx="4" fill="#6cccaa"/></g></svg></button>
    <button class="running" aria-label="Chrome"><svg viewBox="0 0 88 88"><rect width="88" height="88" rx="20" fill="#f8f8f6"/><circle cx="44" cy="44" r="38" fill="#dc4a3c"/><path d="M11 25l20 27 13 9v21A38 38 0 0 1 11 25z" fill="#4da353"/><path d="M44 25h33A38 38 0 0 1 44 82l17-29z" fill="#f3bd42"/><circle cx="44" cy="43" r="18" fill="#fff"/><circle cx="44" cy="43" r="14" fill="#4a80ea"/></svg></button>
    <button aria-label="Safari"><svg viewBox="0 0 88 88"><rect width="88" height="88" rx="20" fill="url(#g-white)"/><circle cx="44" cy="44" r="38" fill="#3f86e0"/><circle cx="44" cy="44" r="34" fill="none" stroke="#d5e6f8" stroke-width="4" stroke-dasharray="1 3"/><path d="M72 20L49 49 39 39z" fill="#e0483a"/><path d="M16 66l23-27 10 10z" fill="#f2f2f2"/></svg></button>
    <button aria-label="Mail"><svg viewBox="0 0 88 88"><rect width="88" height="88" rx="20" fill="url(#g-mail)"/><rect x="14" y="24" width="60" height="40" rx="5" fill="#f1f1f1"/><path d="M16 62l20-20M72 62L52 42M16 26l24 22q4 4 8 0l24-22" fill="none" stroke="#b4b4b4" stroke-width="2"/></svg></button>
    <button aria-label="Calendario"><svg viewBox="0 0 88 88"><rect width="88" height="88" rx="20" fill="#f9f9f8"/><path d="M0 27v-7A20 20 0 0 1 20 0h48a20 20 0 0 1 20 20v7z" fill="#e45c50"/><text x="44" y="20" text-anchor="middle" font-size="17" font-weight="500" fill="#fff">JUL</text><text x="44" y="73" text-anchor="middle" font-size="52" font-weight="300" fill="#222">9</text></svg></button>
    <button class="running" aria-label="Notas"><svg viewBox="0 0 88 88"><rect width="88" height="88" rx="20" fill="#f3f2ee"/><path d="M0 23v-3A20 20 0 0 1 20 0h48a20 20 0 0 1 20 20v3z" fill="url(#g-yellow)"/><path d="M2 27h84" stroke="#999" stroke-width="2" stroke-dasharray="2 2"/><path d="M0 44h88M0 66h88" stroke="#cfcfd2" stroke-width="2"/></svg></button>
    <button class="running" aria-label="Keynote"><svg><use href="#keynote"/></svg></button>
    <button aria-label="Ajustes"><svg viewBox="0 0 88 88"><rect width="88" height="88" rx="20" fill="url(#g-grey)"/><circle cx="44" cy="44" r="36" fill="none" stroke="#222" stroke-width="5" stroke-dasharray="2 1"/><circle cx="44" cy="44" r="33" fill="#303236"/><circle cx="44" cy="44" r="28" fill="none" stroke="#a9adb0" stroke-width="4"/><circle cx="44" cy="44" r="14" fill="none" stroke="#a9adb0" stroke-width="4"/><path d="M44 44h30M44 44L29 19M44 44L29 69" stroke="#a9adb0" stroke-width="4"/></svg><span class="count">1</span></button>
    <button class="running" aria-label="Spotify"><svg viewBox="0 0 88 88"><circle cx="44" cy="44" r="45" fill="#64d36e"/><g fill="none" stroke="#0c120d" stroke-linecap="round"><path d="M19 30q28-8 54 7" stroke-width="9"/><path d="M21 46q24-6 45 6" stroke-width="8"/><path d="M24 60q20-5 38 6" stroke-width="6"/></g></svg></button>
    <button class="running" aria-label="Outlook"><svg viewBox="0 0 88 88"><rect width="88" height="88" rx="20" fill="#fff"/><path d="M24 15h46v14H24z" fill="#2557a6"/><path d="M24 22h24v22H24z" fill="#3074c8"/><path d="M48 22h24v22H48z" fill="#62c8f8"/><path d="M24 44h48v26a3 3 0 0 1-3 3H27z" fill="#4aa2e6"/><path d="M40 44l14 10 18-10v10L40 73z" fill="#3580cc"/><rect x="7" y="27" width="33" height="33" rx="4" fill="#2a6cc4"/><text x="23" y="51" text-anchor="middle" font-size="22" font-weight="700" fill="#fff">O</text></svg></button>
    <button aria-label="Excel"><svg viewBox="0 0 88 88"><rect width="88" height="88" rx="20" fill="#fff"/><path d="M24 15h24v29H24z" fill="#4c9c68"/><path d="M48 15h24v14H48z" fill="#62bd88"/><path d="M48 29h24v15H48z" fill="#4c9c68"/><path d="M24 44h24v29H24z" fill="#2c5c3a"/><path d="M48 44h24v15H48z" fill="#367a4a"/><path d="M48 59h24v14H48z" fill="#2c5c3a"/><rect x="7" y="27" width="33" height="33" rx="4" fill="#2f7340"/><text x="23" y="51" text-anchor="middle" font-size="22" font-weight="700" fill="#fff">X</text></svg></button>
    <button class="running" aria-label="WhatsApp"><svg viewBox="0 0 88 88"><rect width="88" height="88" rx="20" fill="url(#g-green)"/><use href="#whatsapp" x="9" y="4" width="70" height="80" fill="#f4f8f2"/></svg></button>
    <button aria-label="Word"><svg viewBox="0 0 88 88"><rect width="88" height="88" rx="20" fill="#fff"/><path d="M24 15h48v14H24z" fill="#5aa0e8"/><path d="M24 29h48v15H24z" fill="#3f74cc"/><path d="M24 44h48v15H24z" fill="#2c57b4"/><path d="M24 59h48v14H24z" fill="#213d86"/><rect x="7" y="27" width="33" height="33" rx="4" fill="#2755b0"/><text x="23" y="51" text-anchor="middle" font-size="21" font-weight="700" fill="#fff">W</text></svg></button>
    <button aria-label="Notion Calendar"><svg viewBox="0 0 88 88"><path d="M10 5l52-6q8-1 9 6l4 60-56 10q-8 1-9-7L3 14q-1-8 7-9z" fill="#000" stroke="#fff" stroke-width="3"/><path d="M21 17l54-7q8-1 9 6l3 60q0 6-7 7l-56 6q-8 1-9-7l-3-56q0-8 9-9z" fill="#000" stroke="#fff" stroke-width="3"/><path d="M18 33l62-7 2 50-60 7z" fill="#fff"/><text x="50" y="73" text-anchor="middle" font-family="Liberation Serif, serif" font-size="50" font-weight="700">31</text></svg></button>
    <button aria-label="OBS"><svg class="big" viewBox="0 0 100 100"><circle cx="50" cy="50" r="50" fill="#fff"/><circle cx="50" cy="50" r="35" fill="none" stroke="#934a80" stroke-width="18"/></svg></button>
    <button aria-label="Duplicar iPhone"><svg viewBox="0 0 88 88"><rect width="88" height="88" rx="20" fill="#c9ccc6"/><rect x="26" y="6" width="37" height="76" rx="7" fill="#1a1d22"/><rect x="28" y="8" width="33" height="72" rx="5" fill="url(#g-phone)"/><rect x="38" y="9" width="12" height="4" rx="2"/></svg></button>
    <button aria-label="Replit"><svg viewBox="0 0 88 88"><rect width="88" height="88" rx="20" fill="#1a1f2a"/><path d="M26 17h18q3 0 3 3v15H26q-3 0-3-3V20q0-3 3-3zM47 35h20q3 0 3 3v12q0 3-3 3H47zM26 53h21v15q0 3-3 3H26q-3 0-3-3V56q0-3 3-3z" fill="#ea6a2c"/></svg></button>
    <button aria-label="GitHub"><svg viewBox="0 0 88 88"><rect width="88" height="88" rx="20" fill="url(#g-purple)"/><g transform="translate(7 8) scale(3.080)" fill="#f6f6fa"><path d="M12 .297c-6.63 0-12 5.373-12 12 0 5.303 3.438 9.8 8.205 11.385.6.113.82-.258.82-.577 0-.285-.01-1.04-.015-2.04-3.338.724-4.042-1.61-4.042-1.61C4.422 18.07 3.633 17.7 3.633 17.7c-1.087-.744.084-.729.084-.729 1.205.084 1.838 1.236 1.838 1.236 1.07 1.835 2.809 1.305 3.495.998.108-.776.417-1.305.76-1.605-2.665-.3-5.466-1.332-5.466-5.93 0-1.31.465-2.38 1.235-3.22-.135-.303-.54-1.523.105-3.176 0 0 1.005-.322 3.3 1.23.96-.267 1.98-.399 3-.405 1.02.006 2.04.138 3 .405 2.28-1.552 3.285-1.23 3.285-1.23.645 1.653.24 2.873.12 3.176.765.84 1.23 1.91 1.23 3.22 0 4.61-2.805 5.625-5.475 5.92.42.36.81 1.096.81 2.22 0 1.606-.015 2.896-.015 3.286 0 .315.21.69.825.57C20.565 22.092 24 17.592 24 12.297c0-6.627-5.373-12-12-12"/></g></svg></button>
    <button aria-label="Visual Studio Code"><svg viewBox="0 0 88 88"><rect width="88" height="88" rx="20" fill="#fff"/><path d="M12 57l6 5 43-36V13z" fill="#2e78c4"/><path d="M12 31l6-5 43 36v13z" fill="#2a66b0"/><path d="M58 13l16 7v48l-16 7z" fill="#4896e4"/></svg></button>
    <i class="dock-rule"></i>
    <button class="running" aria-label="Acrobat"><svg><use href="#acrobat"/></svg></button>
    <button aria-label="Teams"><svg viewBox="0 0 88 88"><rect width="88" height="88" rx="20" fill="#fff"/><circle cx="46" cy="25" r="10" fill="#7b83e6"/><circle cx="65" cy="26" r="7" fill="#5059c9"/><path d="M58 36h17v20a9 9 0 0 1-17 4z" fill="#5059c9"/><path d="M32 36h28v22a14 14 0 0 1-28 4z" fill="#7b83e6"/><rect x="12" y="27" width="32" height="33" rx="4" fill="#4a52b8"/><text x="28" y="51" text-anchor="middle" font-size="22" font-weight="700" fill="#fff">T</text></svg></button>
    <button aria-label="PowerPoint"><svg viewBox="0 0 88 88"><rect width="88" height="88" rx="20" fill="#fff"/><circle cx="47" cy="44" r="29" fill="#e2704e"/><path d="M47 15a29 29 0 0 1 29 29H47z" fill="#f09070"/><path d="M76 44a29 29 0 0 1-58 0z" fill="#c2563a"/><rect x="10" y="27" width="33" height="33" rx="4" fill="#b83c24"/><text x="26" y="51" text-anchor="middle" font-size="22" font-weight="700" fill="#fff">P</text></svg></button>
    <i class="dock-rule"></i>
    <button aria-label="Documento PDF"><svg class="big" viewBox="0 0 100 100"><path d="M70 14h14v50H70z" fill="#111"/><path d="M15 3h44l24 30v65H15z" fill="#f7f7f6"/><path d="M59 3q4 20 1 30 10-4 23 0z" fill="#d6d6d4"/><path d="M23 18h10M23 25h32M23 29h34M23 33h30M23 40h48M23 44h50M23 48h46M23 52h50M23 56h44M23 60h50M23 66h48M23 70h50M23 74h40" stroke="#a9a9a9" stroke-width="2"/><text x="49" y="91" text-anchor="middle" font-size="13" fill="#777">PDF</text></svg></button>
    <button aria-label="Ventana minimizada"><svg class="big" viewBox="0 0 100 100"><rect y="16" width="100" height="63" fill="#fbfbfb"/><path d="M0 19h100" stroke="#d8d8da" stroke-width="4"/><path d="M5 25h10M5 30h8M5 35h11M5 40h8M5 48h10M5 56h9M5 64h10M34 26h30M44 34h32M50 38h20M34 56h50" stroke="#bbb" stroke-width="2"/><path d="M34 48h50v3H34zM40 51h10v4H40z" fill="#222"/><path d="M20 24h3v6h-3zM6 73h10v3H6z" fill="#3a7bea"/><use href="#acrobat" x="66" y="63" width="34" height="34"/></svg></button>
    <button aria-label="Ventana minimizada"><svg class="big" viewBox="0 0 100 100"><rect y="18" width="100" height="58" fill="#e9ecec"/><path d="M0 23h8v52H0z" fill="#222"/><rect x="8" y="28" width="76" height="42" fill="#15191a"/><path d="M12 33h28M44 33h8" stroke="#67b36f" stroke-width="3"/><path d="M12 40h14M12 46h18M12 52h12M12 58h16M46 50l12-6 14 4" fill="none" stroke="#5d8a66" stroke-width="2"/><path d="M88 26h9M88 40h9" stroke="#bbb" stroke-width="2"/><use href="#keynote" x="66" y="63" width="34" height="34"/></svg></button>
    <button aria-label="Papelera"><svg class="big" viewBox="0 0 100 100"><path d="M12 10l76-2-10 85q-2 4-28 4t-28-4z" fill="#e2e3e2"/><path d="M20 20l8 72M40 24l2 72M62 24l-2 72M80 20l-8 72" stroke="#d9dad9" stroke-width="3"/><path d="M13 10l12-8 8 4 6-9 10 7 8-3 6 6 14-1 11 6-8 12-18 2-24-1-20-3z" fill="#fbfbfb"/><path d="M22 14l8-6 8 12zM40 16l10-10 4 14zM58 12l14-6 2 14z" fill="#7b8084"/><path d="M36 8l8 4-6 6z" fill="#3b9bd0"/><path d="M62 8l6 10-10 2z" fill="#b5553a"/></svg></button>
  </footer>
</div>
</body>
</html>
```
FILE: styles.css
```css
* { box-sizing: border-box; }
body { margin: 0; font-family: Inter, "Liberation Sans", sans-serif; color: #1f2124; }
button { font: inherit; color: inherit; background: none; border: 0; padding: 0; display: inline-flex; align-items: center; justify-content: center; }
a { color: inherit; text-decoration: none; }
h1, h2, p { margin: 0; }
svg { display: block; flex: none; overflow: visible; }
.sprite { position: absolute; width: 0; height: 0; }

/* Desktop */
.desktop { position: relative; height: 100vh; display: flex; flex-direction: column; overflow: hidden; padding-bottom: 10px; background: linear-gradient(to right, #343c18, #424d1c 50%, #647228) bottom / 100% 260px no-repeat, linear-gradient(to right, #5674aa, #8aa0cd); }
.grass { position: absolute; left: 0; bottom: 0; width: 100%; height: 260px; }
.menubar { position: relative; height: 76px; flex: none; display: flex; align-items: center; justify-content: space-between; padding: 0 34px 2px 36px; background: linear-gradient(to right, #48689f, #5574a8 50%, #6581b3); color: #fff; font-size: 26px; font-weight: 500; text-shadow: 0 4px 6px rgb(0 0 0 / 25%); fill: #fff; }
.menu, .status { display: flex; align-items: center; }
.menu { font-size: 25px; gap: 41px; }
.menu-apple { width: 34px; height: 34px; margin-right: -2px; }
.menu-app { font-weight: 700; }
.status { gap: 36px; }
.status svg { width: 32px; height: 32px; filter: drop-shadow(0 3px 4px rgb(0 0 0 / 25%)); }
.status .wide { width: 36px; }
.battery { display: flex; align-items: center; gap: 8px; font-size: 22px; }
.status .battery svg { width: 50px; height: 26px; }

/* Browser window */
.stage { position: relative; flex: 1; min-height: 0; margin-top: 16px; padding-left: 16px; }
.back-window { position: absolute; left: 0; top: 68px; bottom: 32px; width: 60px; border-radius: 20px; background: #c4c4c4; }
.window { position: relative; height: 100%; display: flex; flex-direction: column; overflow: hidden; border-radius: 20px; background: #fff; }
.tabstrip { height: 80px; flex: none; display: flex; align-items: center; padding: 0 12px 0 42px; background: #d2e8c2; box-shadow: inset 0 3px 2px #e6f3dc; }
.lights { display: flex; gap: 16px; margin-right: 34px; }
.lights i { width: 24px; height: 24px; border-radius: 50%; }
.red { background: #ec6a5e; }
.amber { background: #f4be50; }
.green { background: #62c555; }
.tabs { display: flex; flex: 0 1 2990px; min-width: 0; height: 80px; align-self: flex-end; font-size: 24px; }
.tab { position: relative; flex: 1 1 0; min-width: 0; display: flex; align-items: center; padding: 0 32px 0 20px; }
.tab > svg { width: 32px; height: 32px; }
.tab a { flex: 1; min-width: 0; margin: 0 22px 0 16px; overflow: hidden; white-space: nowrap; mask-image: linear-gradient(to right, #000 65%, transparent); }
.tab button svg { width: 18px; height: 18px; }
.tab::after { content: ""; position: absolute; right: 0; top: 24px; width: 4px; height: 32px; border-radius: 2px; background: #fff; }
.tab.active::before { content: ""; position: absolute; inset: 12px 8px 0 4px; border-radius: 20px 20px 0 0; background: #fff; }
.tab.active > * { position: relative; }
.tab.active::after, .tab.before-active::after { display: none; }
.new-tab { margin-left: 20px; }
.new-tab svg { width: 22px; height: 22px; }
.tab-search { margin-left: auto; width: 56px; height: 56px; border-radius: 20px; background: #fff; }
.tab-search svg { width: 20px; height: 20px; }
.toolbar { height: 92px; flex: none; display: flex; align-items: center; padding: 0 28px 0 30px; gap: 39px; }
.toolbar svg { width: 32px; height: 32px; }
.omnibox { flex: 1; height: 68px; display: flex; align-items: center; padding: 0 32px 0 9px; margin: 0 -4px; border-radius: 34px; background: #e1e1e1; }
.site-info { width: 48px; height: 48px; border-radius: 50%; background: #fff; }
.site-info svg { width: 28px; height: 28px; }
.url { flex: 1; min-width: 0; height: 48px; margin: 0 18px; padding: 0; border: 0; outline: 0; font: 28px Inter, "Liberation Sans", sans-serif; color: transparent; background: linear-gradient(to right, #1f2124 1005px, #5d5f62 1005px); background-clip: text; -webkit-background-clip: text; }
.rule { width: 4px; height: 32px; border-radius: 2px; background: #d2e8c2; }
.toolbar .rule { margin: 0 -6px; }
.avatar svg { width: 40px; height: 40px; }
.bookmarks { height: 70px; flex: none; display: flex; align-items: center; gap: 33px; padding: 0 60px 12px 38px; border-bottom: 2px solid #c9cac9; font-size: 24px; white-space: nowrap; }
.bookmarks .rule { margin-right: -8px; }
.bookmarks a { display: flex; align-items: center; gap: 12px; }
.bookmarks svg { width: 32px; height: 32px; }
.bookmarks .apps svg { width: 28px; height: 28px; }
.more { margin-left: auto; }
.bookmarks .more svg { width: 24px; height: 24px; }

/* Web page */
.viewport { flex: 1; min-height: 0; display: flex; }
.page { position: relative; flex: 1; min-width: 0; overflow: hidden; background: #faf7f5; color: #fff; fill: #fff; }
.scrollbar { position: relative; width: 16px; background: #f0f0f0; }
.scrollbar i { position: absolute; bottom: 200px; left: 0; width: 16px; height: 103px; border-radius: 8px; background: #888; }
.site-header { position: relative; margin-bottom: 48px; background: #101628; box-shadow: 0 8px 40px rgb(0 0 0 / 25%); }
.container { max-width: 3008px; height: 144px; margin: 0 auto; display: flex; align-items: center; }
.brand { display: flex; align-items: center; gap: 24px; margin-right: auto; font-size: 48px; font-weight: 700; }
.logo { width: 112px; height: 112px; }
.logo-text { font-family: Lato, sans-serif; font-weight: 900; fill: #e0a92e; stroke: #13120f; stroke-width: 5px; paint-order: stroke; stroke-linejoin: round; }
.site-nav { display: flex; gap: 16px; font-size: 31px; font-weight: 500; }
.site-nav a { height: 80px; display: flex; align-items: center; gap: 16px; padding: 0 32px; border-radius: 12px; }
.site-nav svg { width: 32px; height: 32px; color: #cfd0d4; fill: #cfd0d4; }
.site-nav .w36 { width: 36px; }
.site-nav .w40 { width: 40px; }
.site-nav .current { background: #fff; color: #101628; }
.site-nav .current svg { fill: #101628; }
.nav-rule { width: 1px; height: 80px; margin: 0 16px 0 41px; background: #474c59; }
.lang { display: flex; gap: 8px; padding: 8px; border-radius: 40px; background: #f3f4f6; font-size: 28px; color: #6a7180; }
.lang button { height: 64px; gap: 8px; padding: 0 24px; border-radius: 32px; }
.lang button + button { padding: 0 24px 0 16px; }
.lang .on { background: #101628; color: #fff; }
.lang svg { width: 40px; height: 30px; }

.events { display: flex; flex-direction: column; align-items: center; padding: 120px 48px; text-align: center; background: linear-gradient(#111824, #111827 30%, #111629); }
.events h1 { padding-top: 2px; font-size: 90px; line-height: 112px; font-weight: 700; border-left: 2px solid #fff; }
.lead { max-width: 1376px; margin: 24px 0 94px; font-size: 31px; line-height: 48px; font-weight: 300; color: #d9dce1; }
.cards { width: 100%; max-width: 2048px; display: grid; grid-template-columns: repeat(3, 1fr); gap: 64px; }
.card { display: flex; flex-direction: column; align-items: center; padding: 48px; border-radius: 32px; background: linear-gradient(135deg, #101628, #111827); box-shadow: 0 50px 100px -24px rgb(0 0 0 / 25%); }
.featured { border: 2px solid #50555f; background: #2a2f3b; box-shadow: none; }
.badge { width: 96px; height: 96px; display: flex; align-items: center; justify-content: center; border-radius: 50%; background: #424552; }
.badge svg { width: 36px; height: 36px; }
.badge .plus { width: 46px; }
.featured .badge { background: #f2ce49; }
.card h2 { margin: 33px 0 23px; font-size: 38px; line-height: 56px; font-weight: 700; }
.card p { margin-bottom: 32px; padding: 0 4px; font-size: 24px; line-height: 39px; font-weight: 300; color: #dfe1e5; }
.btn { width: 100%; height: 80px; margin-top: auto; display: flex; align-items: center; justify-content: center; gap: 16px; border-radius: 16px; background: #fff; color: #101628; fill: #101628; font-size: 28px; font-weight: 600; }
.btn svg { width: 28px; height: 28px; }
.featured .btn { background: #000; color: #fff; fill: #fff; }

.cta { display: flex; flex-direction: column; align-items: center; padding: 135px 48px; text-align: center; background: linear-gradient(#111629, #132539 85%); }
.cta h2 { max-width: 1000px; font-size: 74px; line-height: 80px; font-weight: 800; }
.cta p { max-width: 1150px; margin-top: 34px; font-size: 31px; line-height: 48px; font-weight: 300; color: #d9dce1; }

.floating { position: absolute; right: 40px; bottom: 38px; display: flex; flex-direction: column; align-items: flex-end; gap: 24px; }
.floating a { display: flex; align-items: center; justify-content: center; border-radius: 42px; box-shadow: 0 12px 24px rgb(0 0 0 / 25%); }
.wa { width: 83px; height: 104px; background: #60c46b; }
.wa svg { width: 35px; height: 40px; }
.up { width: 72px; height: 96px; background: #f2ce49; }
.up svg { width: 24px; height: 28px; }

/* Dock */
.dock { position: relative; height: 138px; flex: none; display: flex; align-items: stretch; margin: 0 99px; padding: 0 2px 0 3px; border: 2px solid #8d9175; border-radius: 46px; background: linear-gradient(to right, #6f745b, #767b5b 50%, #848c5b); }
.dock button { position: relative; flex: 1 1 0; min-width: 0; align-items: flex-start; padding-top: 18px; }
.dock svg { width: 88px; height: 88px; filter: drop-shadow(0 2px 3px rgb(0 0 0 / 35%)); }
.dock .big { width: 100px; height: 100px; margin-top: -8px; }
.running::after { content: ""; position: absolute; left: calc(50% - 4px); bottom: 2px; width: 8px; height: 8px; border-radius: 50%; background: #000; }
.dock-rule { width: 52px; margin: 16px 0; background: linear-gradient(#4c5230, #4c5230) center / 2px 100% no-repeat; }
.count { position: absolute; right: 0; top: 8px; width: 42px; height: 42px; border-radius: 50%; background: #e14d3c; color: #fff; font-size: 24px; line-height: 42px; }
```
